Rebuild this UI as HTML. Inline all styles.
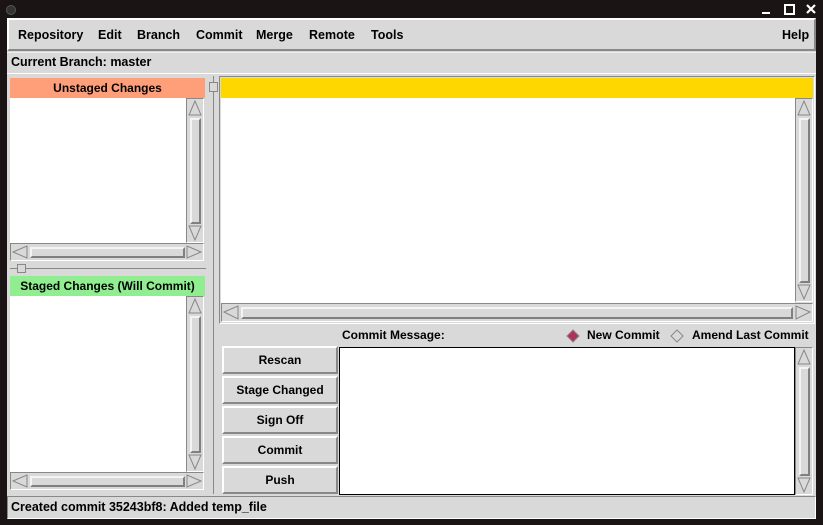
<!DOCTYPE html>
<html><head><style>
*{margin:0;padding:0;box-sizing:border-box}
body{width:823px;height:525px;background:#1a1414;position:relative;overflow:hidden;font-family:"Liberation Sans",sans-serif;font-size:12px;font-weight:bold;color:#000;white-space:nowrap}
.a{position:absolute}
#win{left:7px;top:18px;width:809px;height:501px;background:#d9d9d9}
.menu span{position:absolute;top:8px}
.hdr{text-align:center;line-height:20px;font-size:12px}
.w{background:#fff}
.sb{background:#d9d9d9;border:1px solid;border-color:#888 #fff #fff #888}
.sl{position:absolute;border:2px solid;border-color:#f4f4f4 #808080 #808080 #f4f4f4;background:#d9d9d9}
.btn{position:absolute;left:222px;width:116px;height:28px;border:2px solid;border-color:#fff #888 #888 #fff;background:#d9d9d9;text-align:center;line-height:24px;font-size:12px}
svg{position:absolute}
</style></head><body>
<div class="a" style="left:6px;top:5px;width:10px;height:10px;border-radius:50%;background:#333;border:1px solid #555"></div>
<svg style="left:760px;top:3px" width="60" height="14"><rect x="2" y="9" width="8" height="2" fill="#fff"/><rect x="25" y="2" width="9" height="9" fill="none" stroke="#fff" stroke-width="2"/><path d="M47 2l8 8M55 2l-8 8" stroke="#fff" stroke-width="2.2"/></svg>
<div id="win" class="a">
 <div class="a menu" style="left:0;top:0;width:809px;height:33px;border:2px solid;border-color:#fff #888 #888 #fff;font-size:12.5px">
  <span style="left:9px">Repository</span><span style="left:89px">Edit</span><span style="left:128px">Branch</span><span style="left:187px">Commit</span><span style="left:247px">Merge</span><span style="left:300px">Remote</span><span style="left:362px">Tools</span><span style="left:773px">Help</span>
 </div>
 <div class="a" style="left:0;top:34px;width:809px;height:22px;border-bottom:1px solid #fff;border-top:1px solid #eee"></div>
 <div class="a" style="left:4px;top:37px;font-size:12.5px">Current Branch: master</div>
</div>
<!-- left upper -->
<div class="a hdr" style="left:10px;top:78px;width:195px;height:20px;background:#ff9f7a">Unstaged Changes</div>
<div class="a w" style="left:10px;top:98px;width:176px;height:145px"></div>
<div class="a sb" style="left:186px;top:98px;width:18px;height:145px"><div class="sl" style="left:3px;top:19px;width:11px;height:106px"></div></div>
<svg style="left:187px;top:99px" width="16" height="143"><path d="M8 2L2 16H14Z" fill="#d9d9d9" stroke="#888"/><path d="M8 141L2 127H14Z" fill="#d9d9d9" stroke="#888"/></svg>
<div class="a sb" style="left:10px;top:243px;width:194px;height:18px"><div class="sl" style="left:19px;top:3px;width:155px;height:11px"></div></div>
<svg style="left:11px;top:244px" width="192" height="16"><path d="M2 8L16 2V14Z" fill="#d9d9d9" stroke="#888"/><path d="M190 8L176 2V14Z" fill="#d9d9d9" stroke="#888"/></svg>
<div class="a" style="left:10px;top:268px;width:196px;height:1px;background:#888"></div>
<div class="a" style="left:17px;top:264px;width:9px;height:9px;background:#d9d9d9;border:1px solid #888"></div>
<!-- left lower -->
<div class="a hdr" style="left:10px;top:276px;width:195px;height:20px;background:#90ee90">Staged Changes (Will Commit)</div>
<div class="a w" style="left:10px;top:296px;width:176px;height:176px"></div>
<div class="a sb" style="left:186px;top:296px;width:18px;height:176px"><div class="sl" style="left:3px;top:19px;width:11px;height:137px"></div></div>
<svg style="left:187px;top:297px" width="16" height="174"><path d="M8 2L2 16H14Z" fill="#d9d9d9" stroke="#888"/><path d="M8 172L2 158H14Z" fill="#d9d9d9" stroke="#888"/></svg>
<div class="a sb" style="left:10px;top:472px;width:194px;height:18px"><div class="sl" style="left:19px;top:3px;width:155px;height:11px"></div></div>
<svg style="left:11px;top:473px" width="192" height="16"><path d="M2 8L16 2V14Z" fill="#d9d9d9" stroke="#888"/><path d="M190 8L176 2V14Z" fill="#d9d9d9" stroke="#888"/></svg>
<!-- vertical sash -->
<div class="a" style="left:213px;top:76px;width:1px;height:418px;background:#888"></div>
<div class="a" style="left:209px;top:82px;width:9px;height:10px;background:#d9d9d9;border:1px solid #888"></div>
<!-- right diff -->
<div class="a" style="left:219px;top:76px;width:596px;height:248px;border:1px solid;border-color:#888 #fff #fff #888"></div>
<div class="a" style="left:221px;top:78px;width:592px;height:20px;background:#ffd700"></div>
<div class="a w" style="left:221px;top:98px;width:574px;height:205px"></div>
<div class="a sb" style="left:795px;top:98px;width:18px;height:204px"><div class="sl" style="left:3px;top:19px;width:11px;height:165px"></div></div>
<svg style="left:796px;top:99px" width="16" height="202"><path d="M8 2L2 16H14Z" fill="#d9d9d9" stroke="#888"/><path d="M8 200L2 186H14Z" fill="#d9d9d9" stroke="#888"/></svg>
<div class="a sb" style="left:221px;top:303px;width:592px;height:19px"><div class="sl" style="left:19px;top:3px;width:552px;height:12px"></div></div>
<svg style="left:222px;top:304px" width="590" height="17"><path d="M2 8L16 2V15Z" fill="#d9d9d9" stroke="#888"/><path d="M588 8L574 2V15Z" fill="#d9d9d9" stroke="#888"/></svg>
<!-- commit area -->
<div class="a" style="left:342px;top:328px;font-size:12px">Commit Message:</div>
<svg style="left:565px;top:329px" width="120" height="14"><path d="M8 1L14 7L8 13L2 7Z" fill="#b03060" stroke="#888"/><path d="M112 1L118 7L112 13L106 7Z" fill="#d9d9d9" stroke="#888"/></svg>
<div class="a" style="left:587px;top:328px;font-size:12px">New Commit</div>
<div class="a" style="left:692px;top:328px;font-size:12px">Amend Last Commit</div>
<div class="btn" style="top:346px">Rescan</div>
<div class="btn" style="top:376px">Stage Changed</div>
<div class="btn" style="top:406px">Sign Off</div>
<div class="btn" style="top:436px">Commit</div>
<div class="btn" style="top:466px">Push</div>
<div class="a w" style="left:339px;top:347px;width:456px;height:148px;border:1px solid #000"></div>
<div class="a sb" style="left:795px;top:347px;width:18px;height:148px"><div class="sl" style="left:3px;top:19px;width:11px;height:109px"></div></div>
<svg style="left:796px;top:348px" width="16" height="146"><path d="M8 2L2 16H14Z" fill="#d9d9d9" stroke="#888"/><path d="M8 144L2 130H14Z" fill="#d9d9d9" stroke="#888"/></svg>
<!-- status -->
<div class="a" style="left:7px;top:496px;width:809px;height:23px;border:1px solid;border-color:#888 #fff #fff #888"></div>
<div class="a" style="left:11px;top:500px;font-size:12.5px">Created commit 35243bf8: Added temp_file</div>
</body></html>
